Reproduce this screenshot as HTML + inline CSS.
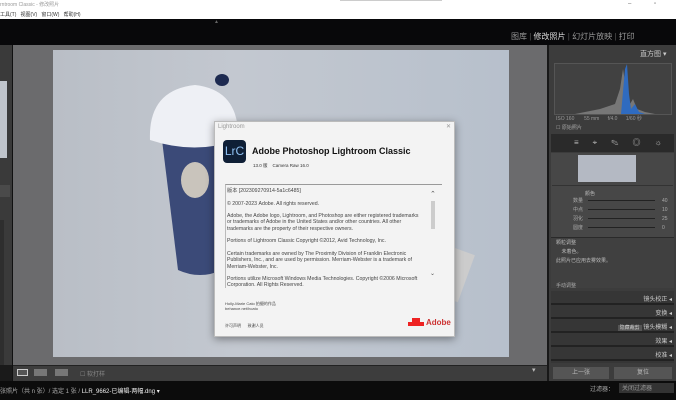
<!DOCTYPE html>
<html><head><meta charset="utf-8"><style>
*{margin:0;padding:0;box-sizing:border-box}
body{width:676px;height:400px;overflow:hidden;background:#1a1a1a;font-family:"Liberation Sans","Noto Sans CJK SC",sans-serif;position:relative}
.a{position:absolute}
.t{font-size:7px;color:#ccc;white-space:nowrap}
</style></head><body>
<div class="a" style="left:0;top:0;width:676px;height:19px;background:#fff"></div>
<div class="a" style="left:0;top:1px;font-size:5px;color:#999">rntroom Classic - 修改照片</div>
<div class="a" style="left:0;top:11px;font-size:5px;color:#333">工具(T)&nbsp;&nbsp; 视图(V)&nbsp;&nbsp; 窗口(W)&nbsp;&nbsp; 帮助(H)</div>
<div class="a" style="left:340px;top:0;width:102px;height:1px;background:#ccc"></div>
<div class="a" style="left:628px;top:1px;font-size:6px;color:#666">–</div>
<div class="a" style="left:654px;top:1px;font-size:6px;color:#666">▫</div>
<div class="a" style="left:0;top:19px;width:676px;height:26px;background:#08080a"></div>
<div class="a" style="left:214px;top:19px;font-size:5px;color:#666">▲</div>
<div class="a" style="left:511px;top:31px;font-size:8px;color:#999">图库 <span style="color:#555">|</span> <span style="color:#ddd">修改照片</span> <span style="color:#555">|</span> 幻灯片放映 <span style="color:#555">|</span> 打印</div>
<div class="a" style="left:0;top:45px;width:12px;height:320px;background:#3a3a3a"></div>
<div class="a" style="left:0;top:81px;width:7px;height:77px;background:#bfc4cb"></div>
<div class="a" style="left:0;top:185px;width:10px;height:12px;background:#4a4a4a"></div>
<div class="a" style="left:0;top:220px;width:4px;height:145px;background:#2e2e2e"></div>
<div class="a" style="left:12px;top:45px;width:1px;height:336px;background:#111"></div>
<div class="a" style="left:13px;top:45px;width:534px;height:320px;background:#6b6b6d"></div>
<div class="a" style="left:53px;top:50px;width:456px;height:307px;background:linear-gradient(90deg,#b9bec6,#c3c8d0 40%,#b7c0cc)"></div>
<svg class="a" style="left:140px;top:70px" width="110" height="210"><path d="M22 70 L95 70 L82 200 Q60 210 38 200Z" fill="#3b4a78"/><ellipse cx="55" cy="110" rx="14" ry="18" fill="#c9c4bc"/><path d="M10 70 Q8 20 55 15 Q100 20 98 70 Q55 85 10 70Z" fill="#eef0f5"/><ellipse cx="82" cy="10" rx="7" ry="6" fill="#1d2a50"/></svg>
<div class="a" style="left:445px;top:250px;width:22px;height:50px;background:#ccc;transform:rotate(20deg)"></div>
<div class="a" style="left:13px;top:365px;width:534px;height:16px;background:#3d3d3d;border-top:1px solid #222"></div>
<div class="a" style="left:17px;top:369px;width:11px;height:7px;border:1px solid #ccc;background:#555"></div>
<div class="a" style="left:34px;top:369px;width:13px;height:7px;background:#777"></div>
<div class="a" style="left:55px;top:369px;width:13px;height:7px;background:#777"></div>
<div class="a t" style="left:80px;top:369px;font-size:6px;color:#888">☐ 软打样</div>
<div class="a t" style="left:532px;top:366px;color:#bbb">▾</div>
<div class="a" style="left:0;top:381px;width:676px;height:19px;background:#0c0c0c"></div>
<div class="a" style="left:0;top:386px;font-size:6px;color:#aaa">张照片（共 n 张）/ 选定 1 张 / <span style="color:#eee">LLR_9662-已编辑-两幅.dng ▾</span></div>
<div class="a" style="left:590px;top:384px;font-size:6px;color:#aaa">过滤器：</div>
<div class="a" style="left:619px;top:383px;width:55px;height:10px;background:#333;font-size:6px;color:#999;padding-left:3px">关闭过滤器</div>
<div class="a" style="left:547px;top:45px;width:129px;height:336px;background:#3c3c3c;border-left:2px solid #181818"></div>
<div class="a t" style="left:640px;top:49px;font-size:7px">直方图 ▾</div>
<div class="a" style="left:554px;top:63px;width:118px;height:52px;background:#414141;border:1px solid #555"></div>
<svg class="a" style="left:555px;top:64px" width="116" height="50"><path d="M20 50 L45 45 L60 40 L65 25 L68 5 L72 30 L75 40 L78 35 L82 45 L90 48 L100 50Z" fill="#777"/><path d="M66 50 L70 5 L72 0 L74 30 L76 45 L80 40 L84 48 L90 50Z" fill="#2f6bc0"/></svg>
<div class="a" style="left:556px;top:115px;font-size:5px;color:#999">ISO 160&nbsp;&nbsp;&nbsp;&nbsp;&nbsp;&nbsp;&nbsp;55 mm&nbsp;&nbsp;&nbsp;&nbsp;&nbsp;&nbsp;f/4.0&nbsp;&nbsp;&nbsp;&nbsp;&nbsp;&nbsp;1/60 秒</div>
<div class="a" style="left:556px;top:124px;font-size:5px;color:#aaa">☐ 原始照片</div>
<div class="a" style="left:551px;top:134px;width:123px;height:18px;background:#2a2a2a;font-size:8px;color:#bbb;padding:3px 0 0 23px;letter-spacing:14px">≡⌖✎◎☼</div>
<div class="a" style="left:551px;top:153px;width:123px;height:106px;background:#474747"></div>
<div class="a" style="left:578px;top:155px;width:58px;height:27px;background:#b4b9c3"></div>
<div class="a" style="left:552px;top:185px;width:121px;height:1px;background:#333"></div>
<div class="a" style="left:585px;top:190px;font-size:5px;color:#bbb">颜色</div>
<div class="a" style="left:573px;top:197px;font-size:5px;color:#aaa;line-height:9px">数量<br>中点<br>羽化<br>圆度</div>
<div class="a" style="left:588px;top:200px;width:67px;height:1px;background:#222;box-shadow:0 9px #222,0 18px #222,0 27px #222"></div>
<div class="a" style="left:662px;top:197px;font-size:5px;color:#aaa;line-height:9px">40<br>10<br>25<br>0</div>
<div class="a" style="left:551px;top:237px;width:123px;height:51px;background:#404040;border-top:1px solid #2a2a2a"></div>
<div class="a" style="left:556px;top:239px;font-size:5px;color:#bbb;line-height:9px">颗粒调整<br>&nbsp;&nbsp;&nbsp;&nbsp;未着色。<br>此照片已应用去雾效果。</div>
<div class="a" style="left:556px;top:282px;font-size:5px;color:#aaa">手动调整</div>
<div class="a" style="left:551px;top:291px;width:123px;height:72px;background:repeating-linear-gradient(#363636 0 12px,#222 12px 14px)"></div>
<div class="a" style="left:551px;top:293px;width:121px;font-size:6px;color:#ccc;text-align:right;line-height:14px">镜头校正 ◂<br>变换 ◂<br><span style="background:#555;font-size:5px;padding:0 2px">隐藏裁剪</span> 镜头模糊 ◂<br>效果 ◂<br>校准 ◂</div>
<div class="a" style="left:553px;top:367px;width:56px;height:12px;background:#555;font-size:6px;color:#bbb;text-align:center;line-height:12px">上一张</div>
<div class="a" style="left:614px;top:367px;width:58px;height:12px;background:#555;font-size:6px;color:#bbb;text-align:center;line-height:12px">复位</div>
<div class="a" style="left:214px;top:121px;width:241px;height:216px;background:#f3f3f3;border:1px solid #bbb;box-shadow:0 2px 8px rgba(0,0,0,.4)"></div>
<div class="a" style="left:218px;top:124px;font-size:6px;color:#999">Lightroom</div>
<div class="a" style="left:446px;top:123px;font-size:6px;color:#999">✕</div>
<div class="a" style="left:223px;top:140px;width:23px;height:23px;background:#0f1f36;border-radius:4px;color:#8ec0f2;font-size:12px;line-height:23px;text-align:center">LrC</div>
<div class="a" style="left:252px;top:146px;font-size:9px;font-weight:bold;color:#111">Adobe Photoshop Lightroom Classic</div>
<div class="a" style="left:253px;top:163px;font-size:4.5px;color:#333">13.0 版&nbsp;&nbsp;&nbsp;&nbsp;Camera Raw 16.0</div>
<div class="a" style="left:225px;top:184px;width:217px;height:104px;border-top:1px solid #999;border-left:1px solid #bbb;background:#f3f3f3;overflow:hidden;font-size:5.2px;color:#444;line-height:6.3px;padding:3px 18px 0 1px">
版本 [202309270914-5a1c6485]<br><br>© 2007-2023 Adobe. All rights reserved.<br><br>Adobe, the Adobe logo, Lightroom, and Photoshop are either registered trademarks or trademarks of Adobe in the United States and/or other countries. All other trademarks are the property of their respective owners.<br><br>Portions of Lightroom Classic Copyright ©2012, Avid Technology, Inc.<br><br>Certain trademarks are owned by The Proximity Division of Franklin Electronic Publishers, Inc., and are used by permission. Merriam-Webster is a trademark of Merriam-Webster, Inc.<br><br>Portions utilize Microsoft Windows Media Technologies. Copyright ©2006 Microsoft Corporation. All Rights Reserved.</div>
<div class="a" style="left:430px;top:190px;font-size:7px;color:#555">⌃</div>
<div class="a" style="left:431px;top:201px;width:4px;height:28px;background:#ccc"></div>
<div class="a" style="left:430px;top:270px;font-size:6px;color:#555">⌄</div>
<div class="a" style="left:225px;top:301px;font-size:4px;color:#444;line-height:5px">Holly-Marie Cato 拍摄的作品<br>behance.net/hcato</div>
<div class="a" style="left:225px;top:323px;font-size:4px;color:#444">许可声明&nbsp;&nbsp;&nbsp;&nbsp;&nbsp;&nbsp;致谢人员</div>
<div class="a" style="left:408px;top:317px;font-size:8px;font-weight:bold;color:#e22">▟▙ <span style="color:#c33">Adobe</span></div>
</body></html>
